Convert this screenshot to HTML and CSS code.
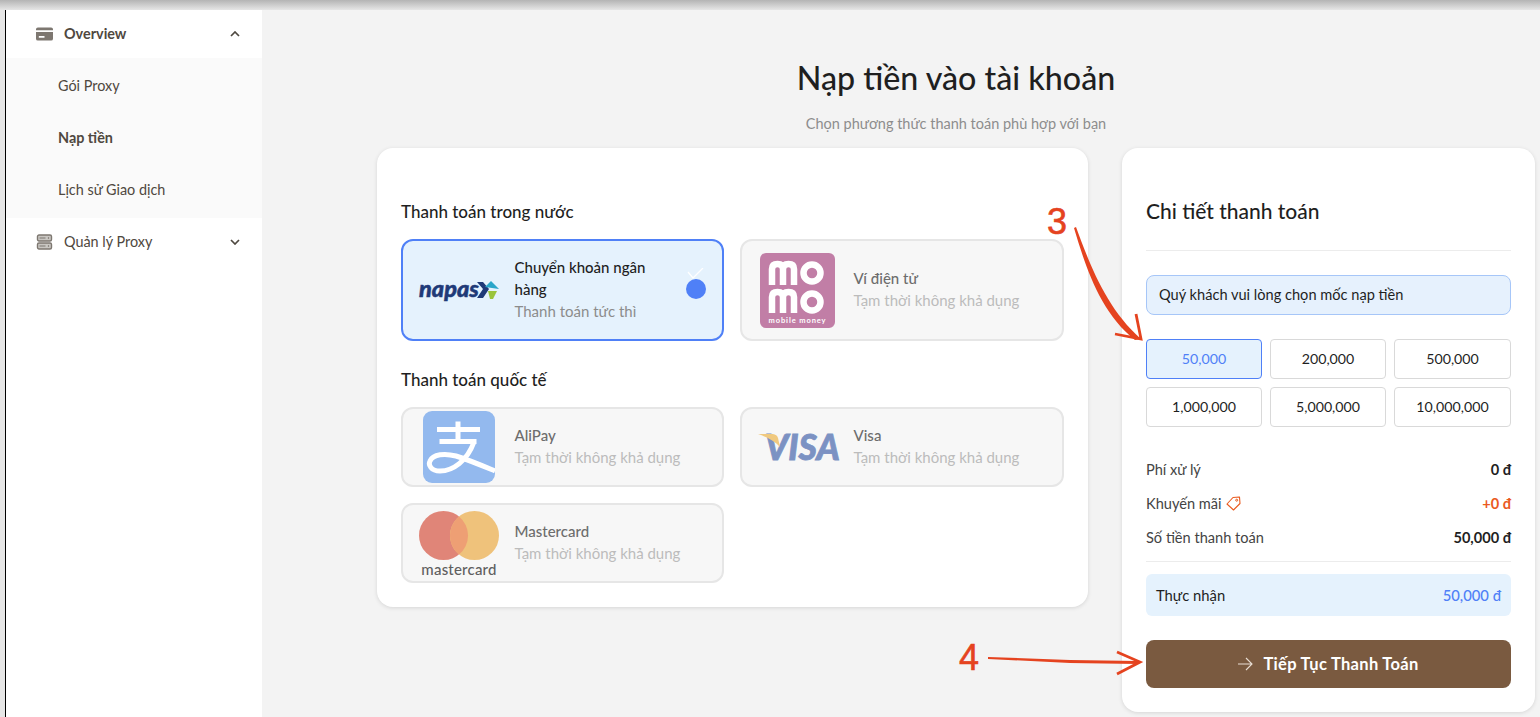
FILE: index.html
```html
<!DOCTYPE html>
<html lang="vi">
<head>
    <meta charset="UTF-8">
    <meta name="viewport" content="width=device-width, initial-scale=1.0">
    <title>Nạp tiền vào tài khoản</title>
    <link rel="stylesheet" href="styles.css">
</head>
<body>
    <div id="screen">
        <aside id="sidebar">
            <div class="menu-head strong">
                <svg class="menu-icon" viewBox="0 0 18 16"><path d="M2 1h14a2 2 0 0 1 2 2v1H0V3a2 2 0 0 1 2-2zM0 6h18v7a2 2 0 0 1-2 2H2a2 2 0 0 1-2-2zm3 4v2h6v-2z" fill="#7d7770" fill-rule="evenodd"/></svg>
                <span>Overview</span>
                <svg class="chevron" viewBox="0 0 10 6"><path d="M1 5l4-4 4 4" fill="none" stroke="#4f4840" stroke-width="1.7"/></svg>
            </div>
            <div class="submenu">
                <div class="sub-item">Gói Proxy</div>
                <div class="sub-item active">Nạp tiền</div>
                <div class="sub-item">Lịch sử Giao dịch</div>
            </div>
            <div class="menu-head">
                <svg class="menu-icon" viewBox="0 0 16 16"><g fill="none" stroke="#7d7770" stroke-width="1.4"><rect x="1" y="1" width="14" height="6" rx="1.5" fill="#c9c6c2"/><rect x="1" y="9" width="14" height="6" rx="1.5" fill="#c9c6c2"/></g><path d="M3 4h6M3 12h6" stroke="#7d7770" stroke-width="1.2"/><path d="M12 3.2v1.6M12 11.2v1.6" stroke="#7d7770" stroke-width="1.2"/></svg>
                <span>Quản lý Proxy</span>
                <svg class="chevron" viewBox="0 0 10 6"><path d="M1 1l4 4 4-4" fill="none" stroke="#4f4840" stroke-width="1.7"/></svg>
            </div>
        </aside>

        <main id="content">
            <h1>Nạp tiền vào tài khoản</h1>
            <p class="subtitle">Chọn phương thức thanh toán phù hợp với bạn</p>
            <div id="columns">
                <section class="card methods">
                    <h3>Thanh toán trong nước</h3>
                    <div class="method-grid tall">
                        <div class="method selected">
                            <div class="logo">
                                <svg width="100" height="38" viewBox="-8 -6 100 38"><text class="napas-text" x="2" y="20">napas</text><path d="M60 5h6l6 7-6 9h-6l6-9z" fill="#1f3a78"/><path d="M74 4l-6 6 14 2z" fill="#2aa6c9"/><path d="M71 14h9l-4 8h-3z" fill="#9ac43c"/></svg>
                            </div>
                            <div class="method-text">
                                <div class="method-name">Chuyển khoản ngân hàng</div>
                                <div class="method-note">Thanh toán tức thì</div>
                            </div>
                            <div class="tick">
                                <svg width="20" height="31" viewBox="0 0 20 31"><circle cx="10" cy="21" r="10" fill="#4f80f7"/><path d="M2 4l5 6L17 0" fill="none" stroke="#fff" stroke-width="1.3"/></svg>
                            </div>
                        </div>
                        <div class="method off">
                            <div class="logo">
                                <svg width="75" height="75" viewBox="0 0 75 75">
                                    <rect width="75" height="75" rx="6" fill="#c17ea6"/>
                                    <g fill="none" stroke="#fff" stroke-width="6.5">
                                        <path d="M12 32V16q0-5 5.500-5t5.500 5v16M23 16q0-5 5.500-5t5.500 5v16"/>
                                        <circle cx="52" cy="20" r="8.500"/>
                                        <path d="M12 60V44q0-5 5.500-5t5.500 5v16M23 44q0-5 5.500-5t5.500 5v16"/>
                                        <circle cx="52" cy="49" r="8.500"/>
                                    </g>
                                    <text class="momo-text" x="37.500" y="70">mobile money</text>
                                </svg>
                            </div>
                            <div class="method-text">
                                <div class="method-name">Ví điện tử</div>
                                <div class="method-note">Tạm thời không khả dụng</div>
                            </div>
                        </div>
                    </div>
                    <h3 class="second">Thanh toán quốc tế</h3>
                    <div class="method-grid">
                        <div class="method off">
                            <div class="logo">
                                <svg width="72" height="72" viewBox="0 0 72 72">
                                    <rect width="72" height="72" rx="9" fill="#93b9ee"/>
                                    <g fill="none" stroke="#fff" stroke-width="5">
                                        <path d="M14 18.500h43M16.500 30.500h37M35 10.500v20"/>
                                        <path d="M51 31C44 50 30 60 17 60 8 60 5 54 7 50 10 43 22 42 33 45 46 49 60 55 72 60"/>
                                    </g>
                                </svg>
                            </div>
                            <div class="method-text">
                                <div class="method-name">AliPay</div>
                                <div class="method-note">Tạm thời không khả dụng</div>
                            </div>
                        </div>
                        <div class="method off">
                            <div class="logo">
                                <svg width="100" height="48" viewBox="-8 -8 100 48"><text class="visa-text" x="9" y="29">VISA</text><path d="M2 3h14c3 0 5 1 6 4l2 9C19 10 11 6 2 3z" fill="#f0c97f"/></svg>
                            </div>
                            <div class="method-text">
                                <div class="method-name">Visa</div>
                                <div class="method-note">Tạm thời không khả dụng</div>
                            </div>
                        </div>
                        <div class="method off">
                            <div class="logo">
                                <svg width="80" height="72" viewBox="0 -2 80 72">
                                    <circle cx="24.500" cy="26.500" r="24.500" fill="#e08578"/>
                                    <circle cx="55.500" cy="26.500" r="24.500" fill="#efc27b"/>
                                    <path d="M40 7.500a24.500 24.500 0 0 1 0 38 24.500 24.500 0 0 1 0-38z" fill="#ee9f74"/>
                                    <text class="mc-text" x="40" y="66">mastercard</text>
                                </svg>
                            </div>
                            <div class="method-text">
                                <div class="method-name">Mastercard</div>
                                <div class="method-note">Tạm thời không khả dụng</div>
                            </div>
                        </div>
                    </div>
                </section>

                <section class="card details">
                    <h2>Chi tiết thanh toán</h2>
                    <div class="notice">Quý khách vui lòng chọn mốc nạp tiền</div>
                    <div class="amounts">
                        <div class="amount selected">50,000</div>
                        <div class="amount">200,000</div>
                        <div class="amount">500,000</div>
                        <div class="amount">1,000,000</div>
                        <div class="amount">5,000,000</div>
                        <div class="amount">10,000,000</div>
                    </div>
                    <div class="rows">
                        <div class="row"><span>Phí xử lý</span><b>0 đ</b></div>
                        <div class="row"><span class="promo">Khuyến mãi
                            <svg width="15" height="15" viewBox="0 0 15 15"><path d="M1 8l6-6.500L13.500 1 14 7.500 7.500 14z" fill="none" stroke="#ea5a1e" stroke-width="1.100" stroke-linejoin="round"/><circle cx="10.700" cy="4.200" r="1" fill="none" stroke="#ea5a1e"/></svg></span><b class="orange">+0 đ</b></div>
                        <div class="row"><span>Số tiền thanh toán</span><b>50,000 đ</b></div>
                    </div>
                    <div class="received"><span>Thực nhận</span><b>50,000 đ</b></div>
                    <button class="pay">
                        <svg width="15" height="14" viewBox="0 0 15 14"><path d="M0 7h14M8 1l6 6-6 6" fill="none" stroke="#e9ded4" stroke-width="1.100"/></svg>
                        Tiếp Tục Thanh Toán
                    </button>
                </section>
            </div>
        </main>
    </div>

    <!-- red notes drawn over the page -->
    <span class="mark mark3">3</span>
    <span class="mark mark4">4</span>
    <svg class="marks" width="1540" height="717" viewBox="0 0 1540 717">
        <path d="M1076 227C1089 262 1105 307 1141 339L1135 340C1100 312 1086 268 1074 228z" fill="#e5431f"/>
        <path d="M1136 314L1141 339 1115 334" fill="none" stroke="#e5431f" stroke-width="2.800"/>
        <path d="M988 657L1070 660 1138 661 1138 664 1070 663 988 659z" fill="#e5431f"/>
        <path d="M1117 652L1140 662 1117 674" fill="none" stroke="#e5431f" stroke-width="2.800"/>
    </svg>
</body>
</html>
```

FILE: styles.css
```css
*{
    margin: 0;
    padding: 0;
    box-sizing: border-box;
}
body{
    width: 1540px;
    height: 717px;
    overflow: hidden;
    font-family: "Lato", "Noto Sans", sans-serif;
    color: #1f1f1f;
    background: linear-gradient(#b4b4b4, #e6e6e6 10px);
}
#screen{
    display: flex;
    height: 707px;
    margin: 10px 0 0 6px;
    box-shadow: -1px 0 0 #000;
}

/* sidebar */
#sidebar{
    width: 256px;
    flex-shrink: 0;
    background: #fff;
    color: #4f4840;
    font-size: 14.4px;
}
.menu-head{
    display: flex;
    align-items: center;
    height: 48px;
    padding: 0 22px 0 30px;
}
.menu-head span{
    flex: 1;
    margin-left: 11px;
    margin-bottom: 1px;
}
.menu-head.strong{
    font-weight: 700;
}
.menu-icon{
    width: 17px;
    height: 16px;
}
.chevron{
    width: 10px;
    height: 6px;
}
.submenu{
    padding: 2px 0;
    background: #fafafa;
}
.sub-item{
    display: flex;
    align-items: center;
    height: 52px;
    padding: 0 0 2px 52px;
}
.sub-item.active{
    font-weight: 700;
}

/* main part */
#content{
    flex: 1;
    background: #f3f3f3;
    padding: 0 5px 0 115px;
}
h1{
    margin-top: 48px;
    text-align: center;
    font-size: 32.2px;
    line-height: 40px;
    font-weight: 500;
}
.subtitle{
    margin-top: 16px;
    text-align: center;
    font-size: 14.5px;
    line-height: 20px;
    color: #8d8d8d;
}
#columns{
    display: flex;
    align-items: flex-start;
    gap: 34px;
    margin-top: 14px;
}
.card{
    background: #fff;
    border-radius: 16px;
    box-shadow: 0 1px 4px rgba(0,0,0,0.12);
}
.methods{
    width: 711px;
    padding: 52px 24px 24px;
}
.methods h3{
    font-size: 17px;
    line-height: 24px;
    font-weight: 500;
    margin-bottom: 15px;
}
.methods h3.second{
    margin-top: 27px;
}
.method-grid{
    display: grid;
    grid-template-columns: 323px 324px;
    gap: 16px;
}
.method{
    display: flex;
    align-items: center;
    height: 80px;
    border: 2px solid #e6e6e6;
    border-radius: 12px;
    background: #f7f7f7;
}
.tall .method{
    height: 102px;
}
.method.selected{
    background: #e5f2fd;
    border-color: #4f80f7;
}
.logo{
    width: 111.5px;
    flex-shrink: 0;
    display: flex;
    align-items: center;
    justify-content: center;
}
.logo svg{
    display: block;
}
.method-text{
    flex: 1;
    margin-top: -2px;
    font-size: 15px;
    line-height: 22px;
}
.method-name{
    font-weight: 500;
    max-width: 150px;
}
.method-note{
    color: #8c8c8c;
}
.off .method-name{
    color: #6d6d6d;
}
.off .method-note{
    color: #bcbcbc;
}
.tick{
    margin: -11px 16px 0 0;
}
.napas-text{
    font: italic 900 23.5px "Lato", sans-serif;
    fill: #1f3a78;
    stroke: #1f3a78;
    stroke-width: 0.5px;
}
.momo-text{
    font: 700 7.5px "Lato", sans-serif;
    fill: #fff;
    text-anchor: middle;
    letter-spacing: 0.9px;
}
.visa-text{
    font: italic 900 35.5px "Lato", sans-serif;
    fill: #7c92c3;
    stroke: #7c92c3;
    stroke-width: 0.8px;
}
.mc-text{
    font: 500 15px "Lato", sans-serif;
    fill: #5f5f5f;
    text-anchor: middle;
    letter-spacing: 0.2px;
}

/* right card */
.details{
    width: 413px;
    height: 564px;
    padding: 47px 24px 0;
}
.details h2{
    font-size: 21px;
    line-height: 32px;
    font-weight: 500;
    padding-bottom: 23px;
    border-bottom: 1px solid #ececec;
}
.notice{
    display: flex;
    align-items: center;
    height: 40px;
    margin-top: 24px;
    padding: 0 0 2px 12px;
    font-size: 14.6px;
    background: #e6f1fd;
    border: 1px solid #a6c6f8;
    border-radius: 8px;
}
.amounts{
    display: grid;
    grid-template-columns: 116px 116px 1fr;
    gap: 8px;
    margin-top: 24px;
}
.amount{
    display: flex;
    align-items: center;
    justify-content: center;
    height: 40px;
    padding-bottom: 2px;
    font-size: 14.2px;
    border: 1px solid #d9d9d9;
    border-radius: 4px;
}
.amount.selected{
    color: #4f80f7;
    background: #e5f2fd;
    border-color: #4f80f7;
}
.rows{
    margin-top: 25px;
    padding-bottom: 7px;
    border-bottom: 1px solid #ececec;
}
.row{
    display: flex;
    align-items: center;
    justify-content: space-between;
    height: 34px;
    font-size: 14.6px;
}
.row span{
    color: #444;
}
.row b, .received b{
    font-weight: 700;
}
.promo{
    display: flex;
    align-items: center;
    gap: 4px;
}
.orange{
    color: #ea5a1e;
}
.received{
    display: flex;
    align-items: center;
    justify-content: space-between;
    height: 42px;
    margin-top: 12px;
    padding: 0 10px;
    font-size: 14.8px;
    background: #e5f2fd;
    border-radius: 6px;
}
.received b{
    color: #4f80f7;
    font-weight: 500;
}
.pay{
    display: flex;
    align-items: center;
    justify-content: center;
    gap: 10px;
    width: 100%;
    height: 48px;
    margin-top: 24px;
    border: none;
    border-radius: 8px;
    background: #7a5a40;
    color: #fff;
    font: 700 16.5px "Lato", sans-serif;
    letter-spacing: 0.3px;
}

/* annotations on top */
.marks{
    position: absolute;
    left: 0;
    top: 0;
    pointer-events: none;
}
.mark{
    position: absolute;
    font: 36px/40px "Liberation Sans", sans-serif;
    color: #e5431f;
    -webkit-text-stroke: 0.6px #e5431f;
}
.mark3{
    left: 1047px;
    top: 202px;
}
.mark4{
    left: 959px;
    top: 638px;
}
```
